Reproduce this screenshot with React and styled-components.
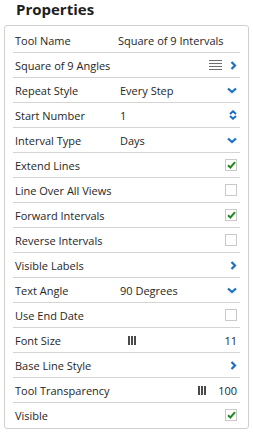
import React from "react";
import styled, { createGlobalStyle } from "styled-components";

const GlobalStyle = createGlobalStyle`
  body {
    margin: 0;
    background: #fff;
    font-family: "Open Sans", "Liberation Sans", sans-serif;
    color: #262626;
  }
`;

const Wrapper = styled.div`
  width: 253px;
  height: 434px;
  overflow: hidden;
`;

const Title = styled.h2`
  margin: 0;
  height: 25px;
  padding-left: 16px;
  font-size: 15px;
  font-weight: 700;
  line-height: 18px;
  color: #1e1e1e;
`;

const Panel = styled.div`
  margin: 0 4px;
  border: 1px solid #cfcfcf;
  border-radius: 3px;
  padding: 2px 8px 1px;
`;

const Row = styled.div`
  display: grid;
  grid-template-columns: 105px 1fr auto;
  align-items: center;
  height: 24px;
  padding: 0 3px 0 2px;
  border-bottom: 1px solid #d4d4d4;
  font-size: 11px;

  &:last-child {
    border-bottom: none;
  }
`;

const Label = styled.span`
  white-space: nowrap;
`;

const Value = styled.span`
  white-space: nowrap;
  margin-left: ${(p) => (p.$inset ? "-2px" : "0")};
`;

const Trail = styled.span`
  display: flex;
  align-items: center;
  justify-content: flex-end;
  gap: 8px;
  white-space: nowrap;
`;

const Box = styled.span`
  display: inline-flex;
  align-items: center;
  justify-content: center;
  width: 10px;
  height: 10px;
  border: 1px solid #c9c9c9;
  background: #fff;
`;

const Grip = styled.span`
  display: inline-flex;
  gap: 1px;
  margin-left: ${(p) => p.$offset || 0}px;

  i {
    width: 2px;
    height: 9px;
    background: #4a4a4a;
  }
`;

const Number = styled.span`
  margin-left: 4px;
`;

const blue = "#1b6fc2";

const ChevronRight = () => (
  <svg width="7" height="9" viewBox="0 0 7 9">
    <path d="M1.5 1 L5 4.5 L1.5 8" fill="none" stroke={blue} strokeWidth="2.2" />
  </svg>
);

const ChevronDown = () => (
  <svg width="10" height="7" viewBox="0 0 10 7">
    <path d="M1 1.5 L5 5 L9 1.5" fill="none" stroke={blue} strokeWidth="2.2" />
  </svg>
);

const Spinner = () => (
  <svg width="8" height="10" viewBox="0 0 8 10">
    <path d="M1 4 L4 1.3 L7 4" fill="none" stroke={blue} strokeWidth="2" />
    <path d="M1 6 L4 8.7 L7 6" fill="none" stroke={blue} strokeWidth="2" />
  </svg>
);

const Lines = () => (
  <svg width="13" height="10" viewBox="0 0 13 10">
    {[0.5, 3.5, 6.5, 9.5].map((y) => (
      <line key={y} x1="0" x2="13" y1={y} y2={y} stroke="#6e6e6e" strokeWidth="1" />
    ))}
  </svg>
);

const Check = ({ on }) => (
  <Box>
    {on && (
      <svg width="9" height="8" viewBox="0 0 9 8">
        <path d="M1 4.2 L3.4 6.5 L8 1.2" fill="none" stroke="#1f8a1f" strokeWidth="2" />
      </svg>
    )}
  </Box>
);

const GripBars = ({ offset }) => (
  <Grip $offset={offset}>
    <i />
    <i />
    <i />
  </Grip>
);

const App = () => {
  return (
    <Wrapper>
      <GlobalStyle />
      <Title>Properties</Title>
      <Panel>
        <Row>
          <Label>Tool Name</Label>
          <Value $inset>Square of 9 Intervals</Value>
          <Trail />
        </Row>
        <Row>
          <Label>Square of 9 Angles</Label>
          <Value />
          <Trail>
            <Lines />
            <ChevronRight />
          </Trail>
        </Row>
        <Row>
          <Label>Repeat Style</Label>
          <Value>Every Step</Value>
          <Trail>
            <ChevronDown />
          </Trail>
        </Row>
        <Row>
          <Label>Start Number</Label>
          <Value>1</Value>
          <Trail>
            <Spinner />
          </Trail>
        </Row>
        <Row>
          <Label>Interval Type</Label>
          <Value>Days</Value>
          <Trail>
            <ChevronDown />
          </Trail>
        </Row>
        <Row>
          <Label>Extend Lines</Label>
          <Value />
          <Trail>
            <Check on />
          </Trail>
        </Row>
        <Row>
          <Label>Line Over All Views</Label>
          <Value />
          <Trail>
            <Check />
          </Trail>
        </Row>
        <Row>
          <Label>Forward Intervals</Label>
          <Value />
          <Trail>
            <Check on />
          </Trail>
        </Row>
        <Row>
          <Label>Reverse Intervals</Label>
          <Value />
          <Trail>
            <Check />
          </Trail>
        </Row>
        <Row>
          <Label>Visible Labels</Label>
          <Value />
          <Trail>
            <ChevronRight />
          </Trail>
        </Row>
        <Row>
          <Label>Text Angle</Label>
          <Value>90 Degrees</Value>
          <Trail>
            <ChevronDown />
          </Trail>
        </Row>
        <Row>
          <Label>Use End Date</Label>
          <Value />
          <Trail>
            <Check />
          </Trail>
        </Row>
        <Row>
          <Label>Font Size</Label>
          <Value>
            <GripBars offset={8} />
          </Value>
          <Trail>11</Trail>
        </Row>
        <Row>
          <Label>Base Line Style</Label>
          <Value />
          <Trail>
            <ChevronRight />
          </Trail>
        </Row>
        <Row>
          <Label>Tool Transparency</Label>
          <Value />
          <Trail>
            <GripBars />
            <Number>100</Number>
          </Trail>
        </Row>
        <Row>
          <Label>Visible</Label>
          <Value />
          <Trail>
            <Check on />
          </Trail>
        </Row>
      </Panel>
    </Wrapper>
  );
};

export default App;
